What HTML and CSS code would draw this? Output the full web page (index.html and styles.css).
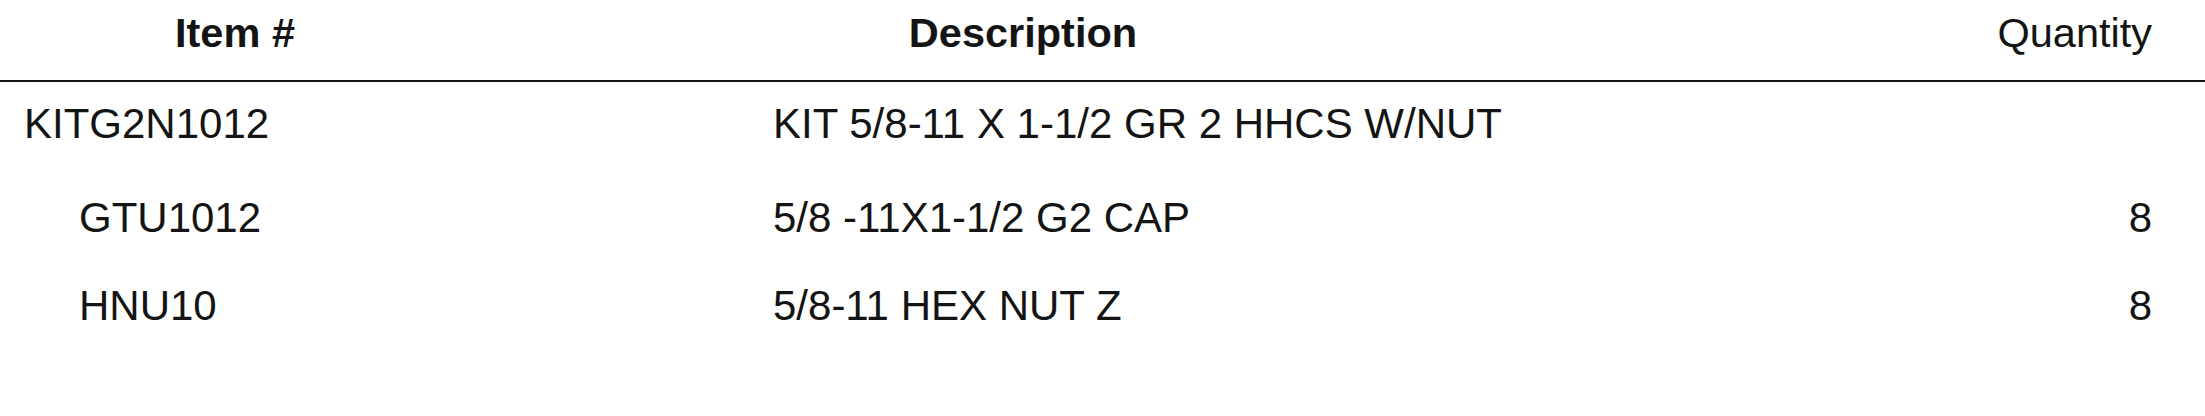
FILE: index.html
```html
<!DOCTYPE html>
<html lang="en">
<head>
<meta charset="utf-8">
<title>Kit components</title>
<link rel="stylesheet" href="styles.css">
</head>
<body>
<div class="sheet">
  <div class="row head">
    <div class="c-item">Item #</div>
    <div class="c-desc">Description</div>
    <div class="c-qty">Quantity</div>
  </div>
  <div class="row line kit">
    <div class="c-item">KITG2N1012</div>
    <div class="c-desc">KIT 5/8-11 X 1-1/2 GR 2 HHCS W/NUT</div>
    <div class="c-qty"></div>
  </div>
  <div class="row line part">
    <div class="c-item">GTU1012</div>
    <div class="c-desc">5/8 -11X1-1/2 G2 CAP</div>
    <div class="c-qty">8</div>
  </div>
  <div class="row line part">
    <div class="c-item">HNU10</div>
    <div class="c-desc">5/8-11 HEX NUT Z</div>
    <div class="c-qty">8</div>
  </div>
</div>
</body>
</html>
```

FILE: styles.css
```css
html, body {
  margin: 0;
  padding: 0;
  background: #ffffff;
}

body {
  font-family: "Liberation Sans", Arial, sans-serif;
  color: #141414;
}

.sheet {
  width: 2205px;
}

.row {
  display: grid;
  grid-template-columns: 773px 500px 1fr;
  padding-right: 53px;
  white-space: nowrap;
}

.head {
  font-size: 41.5px;
  line-height: 46px;
  padding-top: 10px;
  padding-bottom: 24px;
  border-bottom: 2px solid #141414;
}

.head .c-item {
  font-weight: bold;
  text-align: center;
  padding-right: 303px;
}

.head .c-desc {
  font-weight: bold;
  text-align: center;
}

.head .c-qty {
  text-align: right;
}

.line {
  font-size: 42px;
  line-height: 46px;
}

.line .c-qty {
  text-align: right;
}

.kit {
  padding-top: 19px;
  padding-bottom: 48px;
}

.kit .c-item {
  padding-left: 24px;
}

.part {
  padding-bottom: 42px;
}

.part .c-item {
  padding-left: 79px;
}
```
